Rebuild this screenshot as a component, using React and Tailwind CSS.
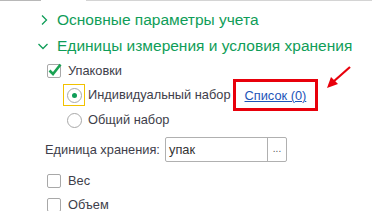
import React from "react";

function Chevron({ down }) {
  return (
    <svg width="12" height="12" viewBox="0 0 12 12" className="shrink-0">
      {down ? (
        <path d="M1.5 4 L6 8.5 L10.5 4" fill="none" stroke="#0f9d58" strokeWidth="1.3" />
      ) : (
        <path d="M4 1.5 L8.5 6 L4 10.5" fill="none" stroke="#0f9d58" strokeWidth="1.3" />
      )}
    </svg>
  );
}

function Checkbox({ checked }) {
  return (
    <span className="relative inline-block h-[14px] w-[14px] shrink-0 rounded-[2px] border border-[#a8a8a8] bg-white">
      {checked && (
        <svg width="16" height="16" viewBox="0 0 16 16" className="absolute -left-[1px] -top-[3px]">
          <path d="M2.5 8.5 L6 12 L13.5 2.5" fill="none" stroke="#1aa253" strokeWidth="2.6" />
        </svg>
      )}
    </span>
  );
}

function Radio({ checked }) {
  return (
    <span className="flex h-[15px] w-[15px] shrink-0 items-center justify-center rounded-full border border-[#a8a8a8] bg-white">
      {checked && <span className="h-[5px] w-[5px] rounded-full bg-[#0f9d58]" />}
    </span>
  );
}

export default function App() {
  return (
    <div className="relative h-[211px] w-[372px] overflow-hidden bg-white font-['Liberation_Sans',Arial,sans-serif]">
      <div className="flex h-px">
        <div className="w-[41px] bg-[#b8b8b8]" />
        <div className="w-[45px]" />
        <div className="flex-1 bg-[#d4d4d4]" />
      </div>

      <div className="mt-[8px] flex h-[22px] items-center pl-[38px]">
        <Chevron />
        <span className="ml-[7px] text-[15.5px] text-[#0f9d58]">Основные параметры учета</span>
      </div>
      <div className="mt-[4px] flex h-[22px] items-center pl-[37px]">
        <Chevron down />
        <span className="ml-[8px] text-[15.5px] text-[#0f9d58]">Единицы измерения и условия хранения</span>
      </div>

      <div className="mt-[4px] flex h-[20px] items-center pl-[47px]">
        <Checkbox checked />
        <span className="ml-[7px] text-[12.8px] text-[#3e3e4a]">Упаковки</span>
      </div>

      <div className="mt-[3px] flex h-[22px] items-center pl-[63px]">
        <span className="flex h-[22px] w-[22px] items-center justify-center border border-[#f2c200]">
          <Radio checked />
        </span>
        <span className="ml-[3px] text-[12.8px] text-[#3e3e4a]">Индивидуальный набор</span>
        <span className="ml-[2px] border-[3px] border-[#e8000b] px-[9px] py-[1px]">
          <a className="text-[12.8px] text-[#1c55b8] underline">Список (0)</a>
        </span>
      </div>

      <div className="mt-[4px] flex h-[20px] items-center pl-[67px]">
        <Radio />
        <span className="ml-[6px] text-[12.8px] text-[#3e3e4a]">Общий набор</span>
      </div>

      <div className="mt-[7px] flex h-[25px] items-center pl-[45px]">
        <span className="text-[12.8px] text-[#3e3e4a]">Единица хранения:</span>
        <div className="ml-auto mr-[85px] flex h-[25px] w-[122px] rounded-[2px] border border-[#b0b0b0]">
          <span className="flex-1 pl-[3px] text-[12.8px] leading-[23px] text-[#333]">упак</span>
          <span className="w-[19px] border-l border-[#b0b0b0] text-center text-[10px] leading-[21px] text-[#555]">...</span>
        </div>
      </div>

      <div className="mt-[9px] flex h-[20px] items-center pl-[47px]">
        <Checkbox />
        <span className="ml-[7px] text-[12.8px] text-[#3e3e4a]">Вес</span>
      </div>
      <div className="mt-[4px] flex h-[20px] items-center pl-[47px]">
        <Checkbox />
        <span className="ml-[7px] text-[12.8px] text-[#3e3e4a]">Объем</span>
      </div>

      <svg className="absolute left-[322px] top-[62px]" width="34" height="32" viewBox="0 0 34 32">
        <path d="M28 5 L11 20" stroke="#e8000b" strokeWidth="2.2" fill="none" />
        <path d="M5 26 L9 15 L16 22 Z" fill="#e8000b" />
      </svg>
    </div>
  );
}
